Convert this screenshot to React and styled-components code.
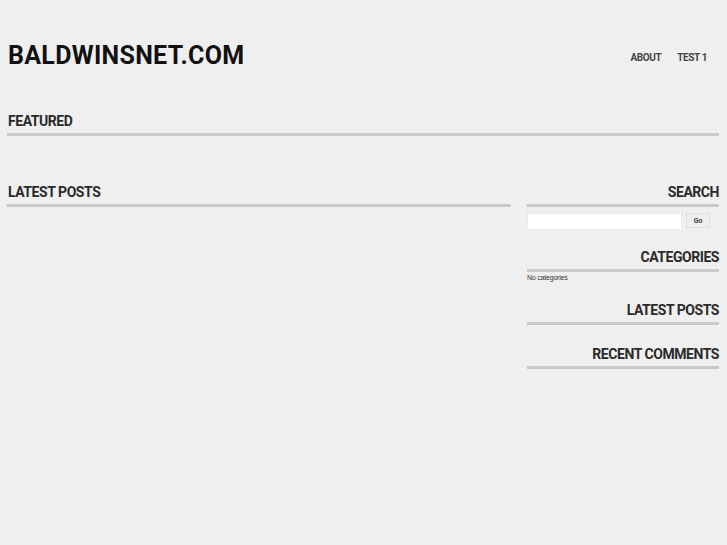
import React from 'react'
import styled, { createGlobalStyle } from 'styled-components'

const GlobalStyle = createGlobalStyle`
  html, body {
    margin: 0;
    padding: 0;
    background: #efefef;
  }
  body {
    font-family: Roboto, "Liberation Sans", Arial, sans-serif;
    color: #333;
  }
`

const Page = styled.div`
  padding: 0 8px 0 7px;
  min-height: 545px;
  box-sizing: border-box;
`

const Header = styled.header`
  display: flex;
  justify-content: space-between;
  align-items: flex-start;
  padding-top: 43px;
`

const SiteTitle = styled.h1`
  margin: 0 0 0 1px;
  font-size: 25px;
  line-height: 25px;
  font-weight: bold;
  letter-spacing: 0.3px;
  color: #111;
`

const Nav = styled.nav`
  display: flex;
  gap: 16px;
  margin-top: 10px;
  padding-right: 12px;
`

const NavLink = styled.a`
  font-size: 10px;
  line-height: 10px;
  font-weight: bold;
  letter-spacing: -0.4px;
  color: #444;
  text-decoration: none;
`

const Section = styled.section`
  margin-top: ${p => p.$top || 0}px;
`

const Heading = styled.h2`
  margin: 0;
  font-size: 14px;
  line-height: 14px;
  font-weight: bold;
  letter-spacing: -0.45px;
  color: #2a2a2a;
  text-align: ${p => (p.$right ? 'right' : 'left')};
  padding-left: ${p => (p.$right ? 0 : 1)}px;
  padding-bottom: 5px;
  border-bottom: 3px solid #c9c9c9;
`

const Columns = styled.div`
  display: grid;
  grid-template-columns: 504px 1fr;
  column-gap: 16px;
  margin-top: 49px;
`

const Sidebar = styled.aside`
  display: flex;
  flex-direction: column;
`

const Widget = styled.div`
  margin-bottom: ${p => p.$gap}px;
`

const SearchForm = styled.form`
  display: flex;
  align-items: flex-start;
  gap: 4px;
  margin-top: 6px;
`

const SearchInput = styled.input`
  width: 155px;
  height: 17px;
  box-sizing: border-box;
  border: 1px dotted #d4d4d4;
  background: #fff;
  padding: 0;
  margin: 0;
`

const GoButton = styled.button`
  width: 24px;
  height: 15px;
  box-sizing: border-box;
  border: 1px dotted #d0d0d0;
  background: transparent;
  padding: 0;
  margin: 0;
  font-family: Roboto, "Liberation Sans", Arial, sans-serif;
  font-size: 7px;
  font-weight: bold;
  color: #444;
`

const SmallText = styled.p`
  margin: 2px 0 0;
  font-family: "Liberation Sans", Arial, sans-serif;
  font-size: 7px;
  line-height: 8px;
  letter-spacing: -0.2px;
  color: #333;
`

export default function App() {
  return (
    <Page>
      <GlobalStyle />
      <Header>
        <SiteTitle>BALDWINSNET.COM</SiteTitle>
        <Nav>
          <NavLink href="#">ABOUT</NavLink>
          <NavLink href="#">TEST 1</NavLink>
        </Nav>
      </Header>

      <Section $top={46}>
        <Heading>FEATURED</Heading>
      </Section>

      <Columns>
        <main>
          <Heading>LATEST POSTS</Heading>
        </main>
        <Sidebar>
          <Widget $gap={20}>
            <Heading $right>SEARCH</Heading>
            <SearchForm onSubmit={e => e.preventDefault()}>
              <SearchInput type="text" />
              <GoButton type="submit">Go</GoButton>
            </SearchForm>
          </Widget>
          <Widget $gap={21}>
            <Heading $right>CATEGORIES</Heading>
            <SmallText>No categories</SmallText>
          </Widget>
          <Widget $gap={22}>
            <Heading $right>LATEST POSTS</Heading>
          </Widget>
          <Widget $gap={22}>
            <Heading $right>RECENT COMMENTS</Heading>
          </Widget>
        </Sidebar>
      </Columns>
    </Page>
  )
}
